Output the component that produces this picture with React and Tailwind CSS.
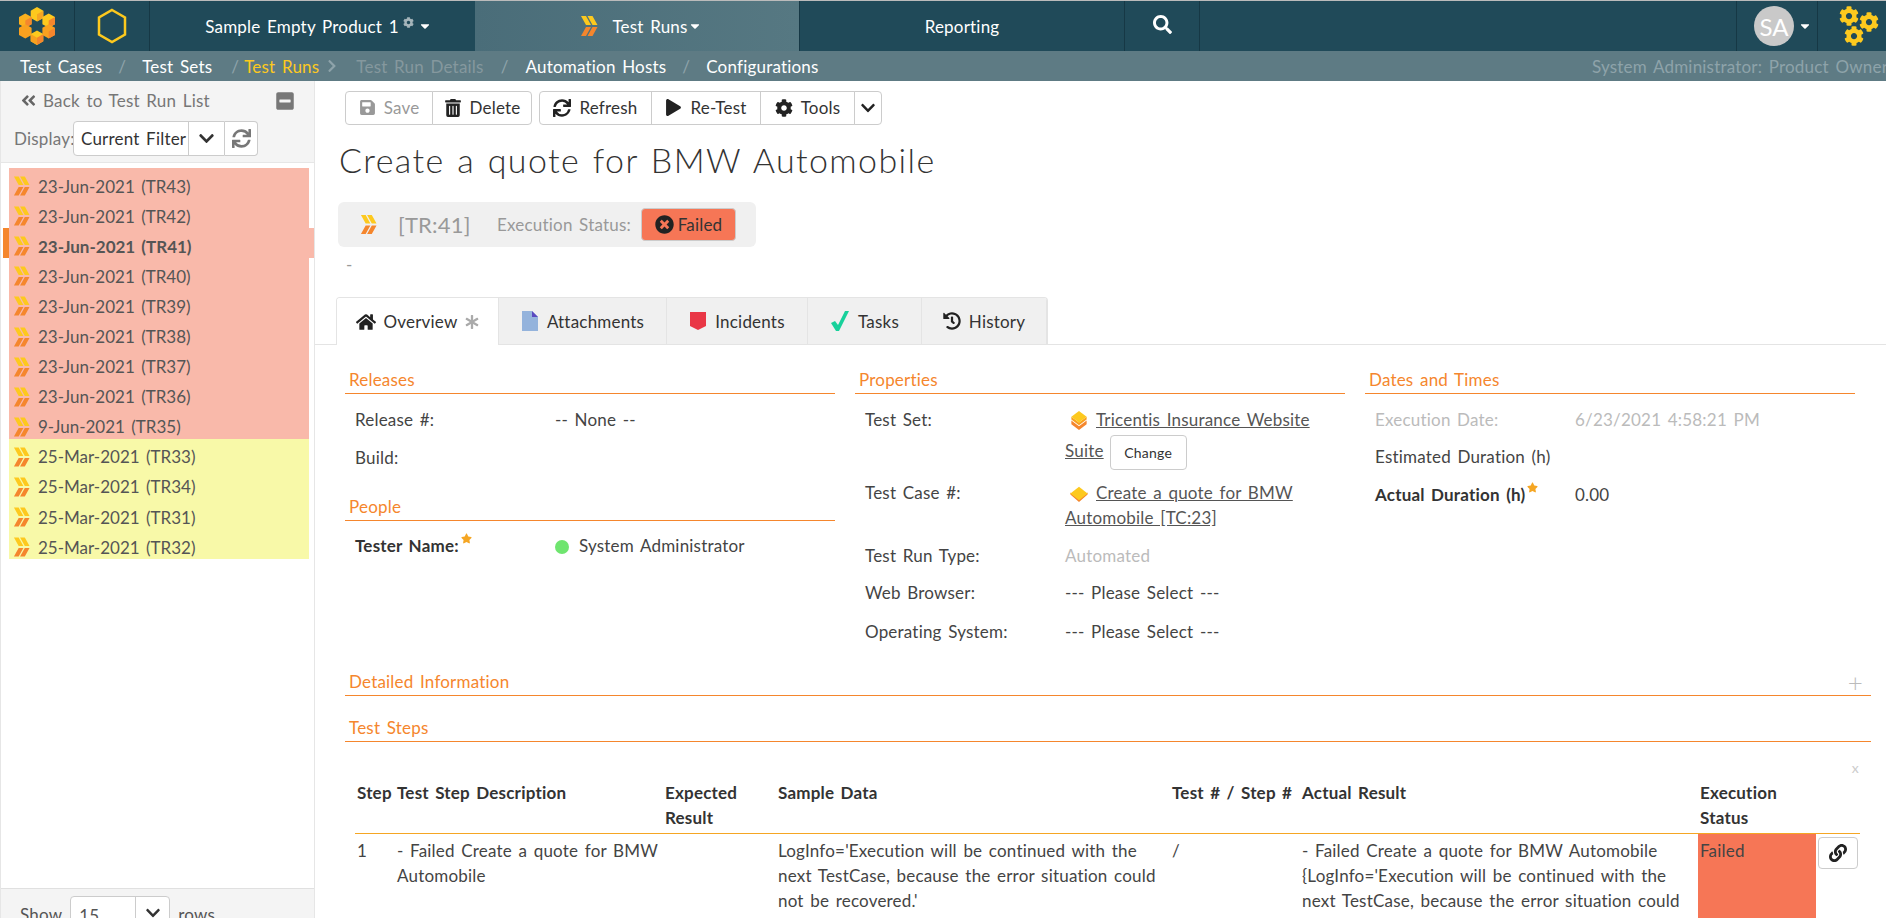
import { FaAngleDoubleLeft, FaAsterisk, FaCaretDown, FaChevronDown, FaChevronRight, FaCog, FaHistory, FaHome, FaLink, FaMinusSquare, FaPlay, FaSave, FaSearch, FaStar, FaSync, FaTimesCircle, FaTrashAlt } from 'react-icons/fa'

const runs = [
  ['23-Jun-2021 (TR43)', 'red'],
  ['23-Jun-2021 (TR42)', 'red'],
  ['23-Jun-2021 (TR41)', 'active'],
  ['23-Jun-2021 (TR40)', 'red'],
  ['23-Jun-2021 (TR39)', 'red'],
  ['23-Jun-2021 (TR38)', 'red'],
  ['23-Jun-2021 (TR37)', 'red'],
  ['23-Jun-2021 (TR36)', 'red'],
  ['9-Jun-2021 (TR35)', 'red'],
  ['25-Mar-2021 (TR33)', 'yellow'],
  ['25-Mar-2021 (TR34)', 'yellow'],
  ['25-Mar-2021 (TR31)', 'yellow'],
  ['25-Mar-2021 (TR32)', 'yellow'],
]

const RunIcon = ({ className }) => (
  <svg viewBox="0 0 18 20" className={className}>
    <path d="M1 0h5l5 9H6zM7.500 0h5l5 9h-5z" fill="#fdc91e" />
    <path d="M1 20l5-9h5l-5 9zM7.500 20l5-9h5l-5 9z" fill="#f5862d" />
  </svg>
)

const Logo = () => (
  <svg viewBox="0 0 40 42" className="h-[40px] w-[36px]">
    <path d="M20 0l7 4v8l-7 4-7-4V4z" fill="#fdc91e" />
    <path d="M20 8l7-4v8l-7 4z" fill="#f5a623" />
    <path d="M33 7l7 4v8l-7 4-7-4v-8z" fill="#fdc91e" />
    <path d="M33 15l7-4v8l-7 4z" fill="#f5862d" />
    <path d="M7 7l7 4v8l-7 4-7-4v-8z" fill="#fbb01f" />
    <path d="M7 15l7-4v8l-7 4z" fill="#f5862d" />
    <path d="M7 19l7 4v8l-7 4-7-4v-8z" fill="#f9a11f" />
    <path d="M33 19l7 4v8l-7 4-7-4v-8z" fill="#f9a11f" />
    <path d="M33 27l7-4v8l-7 4z" fill="#f5862d" />
    <path d="M20 26l7 4v8l-7 4-7-4v-8z" fill="#fdc91e" />
    <path d="M20 34l7-4v8l-7 4z" fill="#f5862d" />
    <path d="M13 30v8l7 4v-8z" fill="#f9a11f" />
  </svg>
)

const Gears = () => (
  <svg viewBox="0 0 40 40" className="h-[40px] w-[40px] text-[#fdc91e]">
    <FaCog x="0" y="0" size={20} />
    <FaCog x="20" y="6" size={20} />
    <FaCog x="5" y="20" size={20} />
  </svg>
)

const CubeIcon = ({ flat }) => (
  <svg viewBox="0 0 20 22" className="mr-[7px] inline-block h-[21px] w-[20px] align-[-5px]">
    {!flat && <path d="M10 21l-8-6v-4l8 6 8-6v4z" fill="#f5862d" />}
    {!flat && <path d="M10 16l-8-6V7l8 6 8-6v3z" fill="#f9a11f" />}
    {flat && <path d="M10 20l-9-8v-2l9 7 9-7v2z" fill="#f5862d" />}
    <path d={flat ? 'M10 4l9 7-9 7-9-7z' : 'M10 1l8 6-8 6-8-6z'} fill="#fdc91e" />
  </svg>
)

const Required = () => <FaStar className="ml-0.5 inline-block align-top text-[11px] text-[#f5a623]" />

const SectionTitle = ({ children, right }) => (
  <div className="flex h-[31px] items-center justify-between border-b border-[#f5862d] pl-[4px] pt-[3px] text-[#f5862d]">
    <span>{children}</span>
    {right}
  </div>
)

const Field = ({ label, children, className, labelClass = 'text-[#444]' }) => (
  <div className={`flex pl-[10px] ${className}`}>
    <div className={`w-[200px] shrink-0 ${labelClass}`}>{label}</div>
    <div className="min-w-0 flex-1">{children}</div>
  </div>
)

const ToolBtn = ({ icon, children, className = '' }) => (
  <button type="button" className={`flex h-[34px] items-center justify-center gap-2 border border-[#ccc] bg-white pb-px text-[#333] ${className}`}>
    {icon}
    {children}
  </button>
)

const Tab = ({ icon, children, active, className = '' }) => (
  <div className={`flex items-center justify-center gap-2 border-r border-[#e4e4e4] ${active ? 'bg-white' : 'bg-[#f0f0f0]'} ${className}`}>
    {icon}
    {children}
  </div>
)

const NavCell = ({ children, className = '' }) => (
  <div className={`flex items-center justify-center border-r border-[#163845] ${className}`}>{children}</div>
)

const Sep = ({ className = 'mx-[16px]' }) => <span className={`text-[#8ea3aa] ${className}`}>/</span>

const App = () => {
  return (
    <div className="flex h-[918px] flex-col overflow-hidden bg-white font-['Lato','Noto_Sans',sans-serif] text-[17px] leading-[25px] tracking-[0.2px] text-[#444] [word-spacing:2px]">
      <div className="h-px bg-[#bbb]" />
      <nav className="flex h-[50px] bg-[#204a59] text-white">
        <NavCell className="w-[75px]"><Logo /></NavCell>
        <NavCell className="w-[75px]">
          <svg viewBox="0 0 30 36" className="h-[36px] w-[30px]">
            <path d="M15 2l13 7.500v17L15 34 2 26.500v-17z" fill="none" stroke="#fdc91e" strokeWidth="2.500" />
          </svg>
        </NavCell>
        <div className="flex w-[325px] items-center justify-center gap-1 pl-3">
          <span>Sample Empty Product 1</span>
          <FaCog className="mb-2 text-[11px] text-[#a5b5ba]" />
          <FaCaretDown className="text-[14px]" />
        </div>
        <div className="flex w-[325px] items-center justify-center gap-[14px] border-r border-[#163845] bg-gradient-to-r from-[#4a6d79] to-[#567882] pl-2">
          <RunIcon className="h-[20px] w-[18px]" />
          <span className="flex items-center">Test Runs<FaCaretDown className="text-[14px]" /></span>
        </div>
        <NavCell className="w-[325px]">Reporting</NavCell>
        <NavCell className="w-[75px]"><FaSearch className="mb-1 text-[19px]" /></NavCell>
        <div className="flex-1 border-r border-[#163845]" />
        <NavCell className="w-[81px] gap-1 pl-[12px]">
          <div className="flex h-[40px] w-[40px] items-center justify-center rounded-full bg-[#c9c9c9] text-[24px] tracking-normal">SA</div>
          <FaCaretDown className="text-[14px]" />
        </NavCell>
        <div className="flex w-[68px] items-center justify-center pl-[13px]"><Gears /></div>
      </nav>
      <div className="flex h-[30px] items-center bg-[#5e7b84] pl-[20px] text-white">
        <span>Test Cases</span>
        <Sep />
        <span>Test Sets</span>
        <Sep className="ml-[19px] mr-[5px]" />
        <span className="text-[#fdc91e]">Test Runs</span>
        <FaChevronRight className="mx-[6px] text-[14px] text-[#8ea3aa]" />
        <span className="ml-[11px] text-[#85989e]">Test Run Details</span>
        <Sep className="mx-[17px]" />
        <span>Automation Hosts</span>
        <Sep />
        <span>Configurations</span>
        <span className="ml-auto w-[294px] overflow-hidden whitespace-nowrap text-[#8ea3aa]">System Administrator: Product Owner</span>
      </div>

      <div className="flex min-h-0 flex-1">
        <aside className="flex w-[315px] shrink-0 flex-col border-x border-[#e6e6e6]">
          <div className="h-[82px] border-b border-[#e6e6e6] bg-[#f4f4f4]">
            <div className="flex items-center justify-between pl-[19px] pr-[19px] pt-[7px] text-[#777]">
              <span className="flex items-center gap-[6px]"><FaAngleDoubleLeft className="text-[17px] text-[#666]" />Back to Test Run List</span>
              <FaMinusSquare className="text-[20px] text-[#777]" />
            </div>
            <div className="mt-[8px] flex items-center pl-[13px]">
              <span className="w-[59px] text-[#777]">Display:</span>
              <div className="flex h-[35px] items-center rounded-l border border-[#ccc] bg-white text-[#333]">
                <span className="w-[114px] whitespace-nowrap pl-[7px]">Current Filter</span>
                <span className="flex h-full w-[36px] items-center justify-center border-l border-[#ccc]"><FaChevronDown className="text-[17px]" /></span>
              </div>
              <div className="flex h-[35px] w-[33px] items-center justify-center rounded-r border border-l-0 border-[#ccc] bg-white"><FaSync className="text-[19px] text-[#777]" /></div>
            </div>
          </div>
          <ul className="flex-1 bg-white pt-[5px] tracking-normal">
            {runs.map(([label, kind]) => (
              <li
                key={label}
                className={`flex h-[30.100px] items-center pl-[4px] pt-[6px] text-[#555] ${
                  kind === 'active'
                    ? 'ml-[2px] border-l-[6px] border-[#f5862d] bg-[#f9b9aa] font-bold'
                    : kind === 'red'
                      ? 'ml-[8px] mr-[5px] bg-[#f9b9aa]'
                      : 'ml-[8px] mr-[5px] bg-[#f8f9a8]'
                }`}
              >
                <RunIcon className="mr-[8px] h-[20px] w-[17px] shrink-0" />
                {label}
              </li>
            ))}
          </ul>
          <div className="flex h-[30px] gap-2 border-t border-[#e0e0e0] bg-[#f4f4f4] pl-[19px] pt-[7px] text-[#555]">
            <span className="pt-[6px]">Show</span>
            <div className="flex h-[34px] w-[100px] rounded border border-[#ccc] bg-white">
              <span className="w-[64px] pl-[8px] pt-[6px]">15</span>
              <span className="flex flex-1 justify-center border-l border-[#ccc] pt-[8px]"><FaChevronDown className="text-[16px] text-[#333]" /></span>
            </div>
            <span className="pt-[6px]">rows</span>
          </div>
        </aside>

        <main className="min-w-0 flex-1 overflow-hidden">
          <div className="flex gap-[7px] pl-[30px] pt-[10px]">
            <div className="flex">
              <ToolBtn icon={<FaSave className="text-[17px] text-[#999]" />} className="w-[88px] rounded-l"><span className="text-[#999]">Save</span></ToolBtn>
              <ToolBtn icon={<FaTrashAlt className="text-[18px] text-[#222]" />} className="-ml-px w-[100px] rounded-r">Delete</ToolBtn>
            </div>
            <div className="flex">
              <ToolBtn icon={<FaSync className="text-[18px] text-[#222]" />} className="w-[113px] rounded-l">Refresh</ToolBtn>
              <ToolBtn icon={<FaPlay className="text-[17px] text-[#222]" />} className="-ml-px w-[110px]">Re-Test</ToolBtn>
              <ToolBtn icon={<FaCog className="text-[18px] text-[#222]" />} className="-ml-px w-[95px]">Tools</ToolBtn>
              <button type="button" className="-ml-px flex h-[34px] w-[28px] items-center justify-center rounded-r border border-[#ccc] bg-white"><FaChevronDown className="text-[16px] text-[#222]" /></button>
            </div>
          </div>
          <h1 className="pl-[24px] pt-[15px] text-[34px] font-light leading-[40px] tracking-[1.400px] text-[#333]">Create a quote for BMW Automobile</h1>
          <div className="ml-[23px] mt-[22px] flex h-[45px] w-[418px] items-center rounded-md bg-[#f0f0f0] pl-[22px]">
            <RunIcon className="h-[21px] w-[17px]" />
            <span className="ml-[21px] w-[99px] text-[22px] text-[#999]">[TR:41]</span>
            <span className="w-[144px] whitespace-nowrap text-[#999]">Execution Status:</span>
            <span className="flex h-[33px] w-[95px] items-center justify-center gap-1 rounded border border-[#ccc] bg-[#f67656] text-[#333]"><FaTimesCircle className="text-[19px] text-[#222]" />Failed</span>
          </div>
          <div className="pl-[31px] pt-[5px] text-[#999]">-</div>
          <div className="mt-[20px] flex h-[48px] border-b border-[#e4e4e4] pl-[21px]">
            <div className="flex h-[48px] overflow-hidden rounded-t border-x border-t border-[#e4e4e4] text-[#333]">
              <Tab active className="w-[162px]" icon={<FaHome className="text-[20px] text-[#222]" />}>Overview <FaAsterisk className="text-[14px] text-[#aaa]" /></Tab>
              <Tab className="w-[168px] border-b border-b-[#e4e4e4]" icon={<svg viewBox="0 0 16 20" className="h-[20px] w-[18px]"><path d="M0 0h10l6 6v14H0z" fill="#94b3dc" /><path d="M10 0l6 6h-6z" fill="#5a49c0" /></svg>}>Attachments</Tab>
              <Tab className="w-[141px] border-b border-b-[#e4e4e4]" icon={<svg viewBox="0 0 16 20" className="h-[20px] w-[18px]"><path d="M0 1h16v14l-8 4-8-4z" fill="#e93746" /></svg>}>Incidents</Tab>
              <Tab className="w-[114px] border-b border-b-[#e4e4e4]" icon={<svg viewBox="0 0 18 20" className="h-[20px] w-[20px]"><path d="M0 12l4-2 3 4 7-14h4L8 20H5z" fill="#18d19b" /></svg>}>Tasks</Tab>
              <Tab className="w-[125px] border-b border-b-[#e4e4e4]" icon={<FaHistory className="text-[18px] text-[#222]" />}>History</Tab>
            </div>
          </div>

          <div className="grid grid-cols-[490px_490px_490px] gap-x-[20px] pl-[30px] pt-[18px]">
            <section>
              <SectionTitle>Releases</SectionTitle>
              <Field label="Release #:" className="mt-[13px]">-- None --</Field>
              <Field label="Build:" className="mt-[13px] h-[25px]" />
              <div className="mt-[20px]"><SectionTitle>People</SectionTitle></div>
              <Field label={<span className="font-bold">Tester Name:<Required /></span>} className="mt-[12px]" labelClass="text-[#333]">
                <span className="mr-[10px] inline-block h-[14px] w-[14px] rounded-full bg-[#6fe56f] align-[-2px]" />
                System Administrator
              </Field>
            </section>
            <section>
              <SectionTitle>Properties</SectionTitle>
              <Field label="Test Set:" className="mt-[13px]">
                <div className="-mt-[2px] leading-[30px]">
                  <span className="pl-[4px]"><CubeIcon /></span><span className="text-[#555] underline">Tricentis Insurance Website Suite</span>
                  <button type="button" className="ml-[6px] h-[35px] w-[77px] rounded border border-[#ccc] align-middle text-[14px] leading-[20px] text-[#333]">Change</button>
                </div>
              </Field>
              <Field label="Test Case #:" className="mt-[10px]">
                <span className="pl-[4px]"><CubeIcon flat /></span><span className="text-[#555] underline">Create a quote for BMW Automobile [TC:23]</span>
              </Field>
              <Field label="Test Run Type:" className="mt-[13px]"><span className="text-[#bbb]">Automated</span></Field>
              <Field label="Web Browser:" className="mt-[12px]">--- Please Select ---</Field>
              <Field label="Operating System:" className="mt-[14px]">--- Please Select ---</Field>
            </section>
            <section>
              <SectionTitle>Dates and Times</SectionTitle>
              <Field label="Execution Date:" labelClass="text-[#bbb]" className="mt-[13px]"><span className="text-[#bbb]">6/23/2021 4:58:21 PM</span></Field>
              <Field label="Estimated Duration (h)" className="mt-[12px] h-[25px] whitespace-nowrap" />
              <Field label={<span className="font-bold">Actual Duration (h)<Required /></span>} labelClass="text-[#333]" className="mt-[13px]">0.00</Field>
            </section>
          </div>

          <div className="ml-[30px] mr-[15px] mt-[21px]">
            <SectionTitle right={<span className="pr-[8px] text-[26px] font-light leading-none text-[#bbb]">+</span>}>Detailed Information</SectionTitle>
            <div className="mt-[15px]"><SectionTitle>Test Steps</SectionTitle></div>
          </div>
          <div className="flex justify-end pr-[27px] pt-[16px] text-[14px] leading-[20px] text-[#ccc]">x</div>
          <table className="ml-[40px] mt-[2px] w-[1505px] table-fixed border-collapse">
            <colgroup>
              <col className="w-[42px]" /><col className="w-[268px]" /><col className="w-[113px]" /><col className="w-[394px]" /><col className="w-[130px]" /><col className="w-[396px]" /><col className="w-[118px]" /><col />
            </colgroup>
            <thead>
              <tr className="border-b border-[#f5a623] text-left align-top text-[#333]">
                <th className="pl-[2px] font-bold">Step</th>
                <th className="font-bold">Test Step Description</th>
                <th className="pb-[3px] font-bold">Expected Result</th>
                <th className="font-bold">Sample Data</th>
                <th className="whitespace-nowrap font-bold">Test # / Step #</th>
                <th className="font-bold">Actual Result</th>
                <th className="pb-[3px] pl-[2px] font-bold">Execution Status</th>
                <th />
              </tr>
            </thead>
            <tbody>
              <tr className="align-top">
                <td className="pl-[2px] pt-[4px]">1</td>
                <td className="pt-[4px]">- Failed Create a quote for BMW Automobile</td>
                <td />
                <td className="pr-[8px] pt-[4px]">LogInfo='Execution will be continued with the next TestCase, because the error situation could not be recovered.'</td>
                <td className="pt-[4px]">/</td>
                <td className="pr-[8px] pt-[4px]">- Failed Create a quote for BMW Automobile {"{"}LogInfo='Execution will be continued with the next TestCase, because the error situation could not be recovered.'{"}"}</td>
                <td className="bg-[#f67656] pl-[2px] pt-[4px]">Failed</td>
                <td className="pl-[2px] pt-[3px]">
                  <button type="button" className="flex h-[32px] w-[40px] items-center justify-center rounded border border-[#ccc]"><FaLink className="text-[18px] text-[#222]" /></button>
                </td>
              </tr>
            </tbody>
          </table>
        </main>
      </div>
    </div>
  )
}

export default App
